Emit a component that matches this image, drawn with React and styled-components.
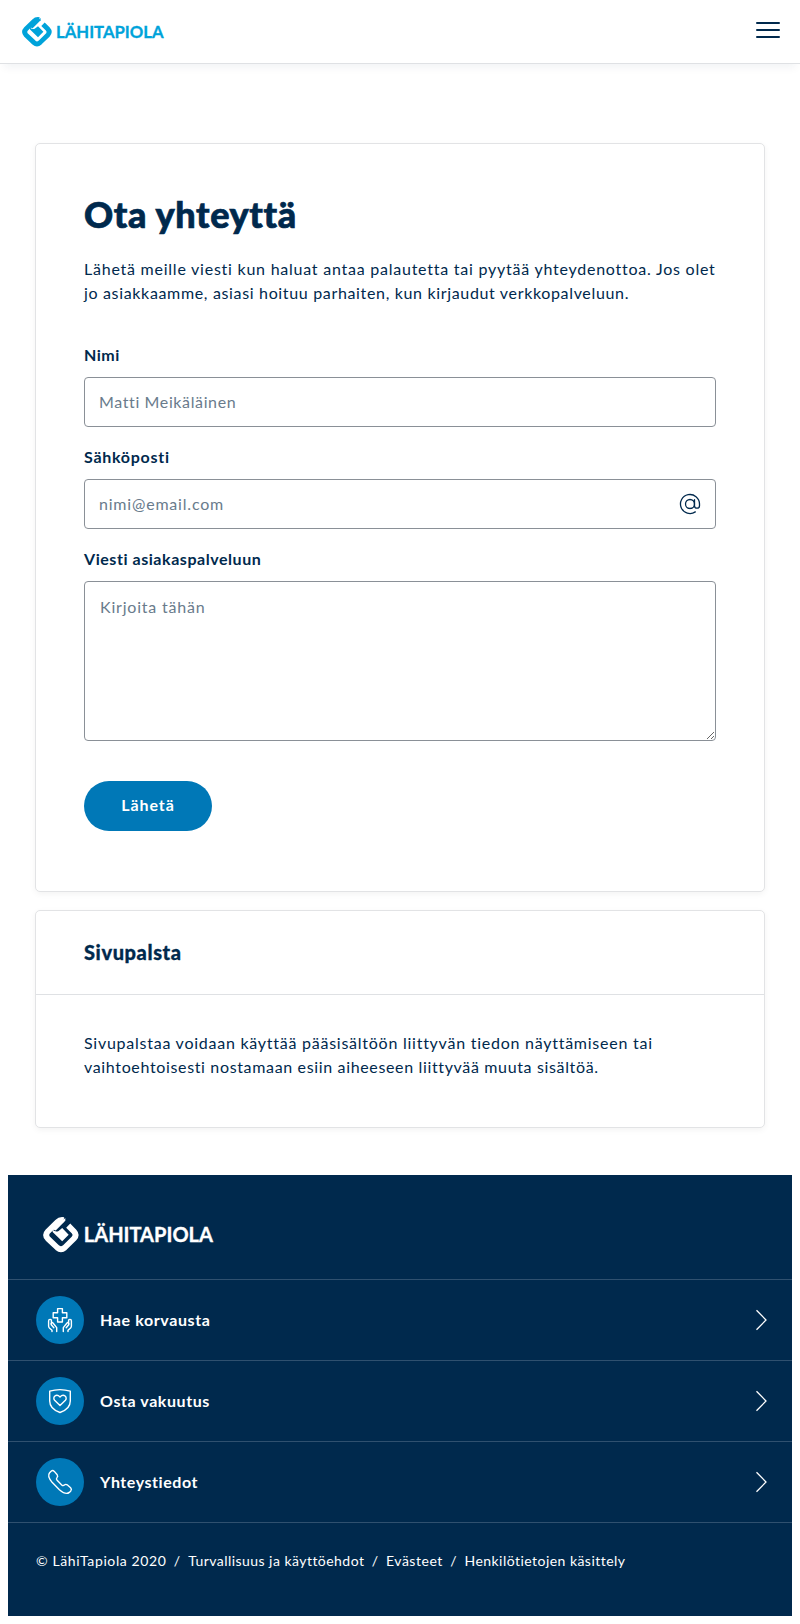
import React from 'react';
import styled, { createGlobalStyle } from 'styled-components';

const navy = '#00294d';
const blue = '#0078b7';

const GlobalStyle = createGlobalStyle`
  *, *::before, *::after { box-sizing: border-box; }
  body {
    margin: 0;
    background: #fff;
    color: ${navy};
    font-family: Lato, "Liberation Sans", sans-serif;
    font-size: 16px;
    line-height: 24px;
  }
`;

const Header = styled.header`
  display: flex;
  align-items: flex-start;
  justify-content: space-between;
  height: 64px;
  padding: 17px 20px 0 22px;
  border-bottom: 1px solid #dfe1e4;
  box-shadow: 0 8px 8px -4px rgba(0, 41, 77, 0.05);
`;

const LogoBox = styled.div`
  display: flex;
  align-items: center;
  color: ${(p) => p.$color};
  svg { display: block; overflow: visible; }
  text { font-family: Lato, sans-serif; font-weight: 700; font-size: 17.6px; stroke: currentColor; stroke-width: 0.3px; }
`;

const MenuButton = styled.button`
  display: flex;
  flex-direction: column;
  gap: 5px;
  width: 24px;
  margin-top: 5px;
  padding: 0;
  border: 0;
  background: none;
`;

const MenuBar = styled.span`
  height: 2px;
  border-radius: 1px;
  background: ${navy};
`;

const Main = styled.main`
  display: flex;
  flex-direction: column;
  gap: 18px;
  padding: 79px 35px 47px;
`;

const Card = styled.section`
  border: 1px solid #e2e3e5;
  border-radius: 5px;
  background: #fff;
  box-shadow: 0 2px 6px rgba(0, 0, 0, 0.05);
`;

const FormCard = styled(Card)`
  height: 749px;
  padding: 48px 48px 0;
`;

const Title = styled.h1`
  margin: 0;
  font-size: 36px;
  line-height: 44px;
  font-weight: 900;
  letter-spacing: 0.65px;
  -webkit-text-stroke: 0.7px currentColor;
`;

const Text = styled.p`
  margin: ${(p) => p.$margin || 0};
`;

const Line = styled.span`
  display: block;
  white-space: nowrap;
  letter-spacing: ${(p) => p.$spacing};
`;

const Field = styled.div`
  display: flex;
  flex-direction: column;
  margin-bottom: ${(p) => p.$gap || '18px'};
`;

const Label = styled.label`
  margin-bottom: 10px;
  font-weight: 700;
  letter-spacing: ${(p) => p.$spacing};
`;

const InputFrame = styled.div`
  display: flex;
  align-items: center;
  height: 50px;
  padding: 0 13px 0 14px;
  border: 1px solid #8a9097;
  border-radius: 4px;
`;

const Input = styled.input`
  flex: 1;
  min-width: 0;
  padding: 0;
  border: 0;
  outline: 0;
  background: none;
  font: inherit;
  letter-spacing: ${(p) => p.$spacing};
  &::placeholder { color: #697b8c; opacity: 1; }
`;

const TextArea = styled.textarea`
  display: block;
  width: 100%;
  height: 160px;
  padding: 13px 15px;
  border: 1px solid #8a9097;
  border-radius: 4px;
  outline: 0;
  background: #fff;
  font: inherit;
  letter-spacing: ${(p) => p.$spacing};
  &::placeholder { color: #697b8c; opacity: 1; }
`;

const Submit = styled.button`
  display: block;
  width: 128px;
  height: 50px;
  padding: 0 0 3px;
  border: 0;
  border-radius: 25px;
  background: ${blue};
  color: #fff;
  font: inherit;
  font-weight: 700;
  letter-spacing: 0.95px;
`;

const SideHeading = styled.h2`
  margin: 0;
  padding: 29px 48px 29px;
  border-bottom: 1px solid #dfe1e4;
  font-size: 20px;
  line-height: 25px;
  font-weight: 900;
  letter-spacing: 0.6px;
  -webkit-text-stroke: 0.3px currentColor;
`;

const SideBody = styled.div`
  height: 132px;
  padding: 36px 48px 0;
`;

const Footer = styled.footer`
  height: 441px;
  margin: 0 8px 8px;
  background: ${navy};
  color: #fff;
`;

const FooterBrand = styled.div`
  height: 104px;
  padding: 42px 35px 0;
`;

const FooterLink = styled.a`
  display: flex;
  align-items: center;
  height: 81px;
  padding: 0 25px 0 28px;
  border-top: 1px solid #2f506f;
  color: #fff;
  font-weight: 700;
  letter-spacing: ${(p) => p.$spacing};
`;

const IconDisc = styled.span`
  display: flex;
  align-items: center;
  justify-content: center;
  width: 48px;
  height: 48px;
  margin-right: 16px;
  border-radius: 50%;
  background: ${blue};
`;

const LinkText = styled.span`
  flex: 1;
`;

const Legal = styled.div`
  display: flex;
  padding: 26px 28px 0;
  border-top: 1px solid #2f506f;
  font-size: 14px;
`;

const LegalItem = styled.span`
  letter-spacing: ${(p) => p.$spacing};
  &:not(:last-child)::after { content: '/'; margin: 0 7.4px; }
`;

const Stroke = ({ size = 24, width = 1.4, children }) => (
  <svg width={size} height={size} viewBox="0 0 24 24" fill="none" stroke="currentColor"
    strokeWidth={width} strokeLinecap="round" strokeLinejoin="round" overflow="visible">{children}</svg>
);

const Logo = ({ color, scale = 1 }) => (
  <LogoBox $color={color}>
    <svg width={142 * scale} height={30 * scale} viewBox="0 0 142 30">
      <path fill="none" stroke="currentColor" strokeWidth="4.8"
        d="M17.2 2.5Q14.2 1.9 12 4.1L4 12Q1.2 15 4 18L12 25.6Q15 28.2 18 25.6L25.8 18Q28.6 15 25.8 12L21 7.2" />
      <path fill="currentColor" d="M18.6 .9L18.6 3.2L10.6 11.2L7.4 10Z" />
      <path fill="currentColor" d="M8 10.6Q10.6 13 13 11.6L16 9.2L21.4 14.8L16 20.2L8 12.6Z" />
      <text x="34" y="20.8" fill="currentColor" textLength="107.6" lengthAdjust="spacingAndGlyphs">LÄHITAPIOLA</text>
    </svg>
  </LogoBox>
);

const AtIcon = () => (
  <Stroke width={1.3}>
    <circle cx="12" cy="12" r="4.5" />
    <path d="M16.5 7.6V13.7A2.5 2.5 0 0 0 21.5 13.7V12A9.5 9.5 0 1 0 17.3 19.9" />
  </Stroke>
);

const CareIcon = () => (
  <Stroke>
    <path d="M9.6 .6H14.4V4.8H18.8V9.8H14.4V14H9.6V9.8H5.2V4.8H9.6Z" />
    <path d="M3.4 16.8V12.6C3.4 10.9.6 10.9.6 12.9V18Q.6 19.2 1.4 20L4 22.2V23.6M8.7 23.6V19.6L5.2 15.2C3.9 13.8 2.3 15.4 3.3 16.8L5.8 19.8" />
    <path d="M20.6 16.8V12.6C20.6 10.9 23.4 10.9 23.4 12.9V18Q23.4 19.2 22.6 20L20 22.2V23.6M15.3 23.6V19.6L18.8 15.2C20.1 13.8 21.7 15.4 20.7 16.8L18.2 19.8" />
  </Stroke>
);

const ShieldIcon = () => (
  <Stroke>
    <path d="M1.7 2.2Q12-1 22.3 2.2V12Q22.3 20 12 23.5Q1.7 20 1.7 12Z" />
    <path d="M12 16.6L6.6 11.3C4.1 8.5 8.1 4 12 7.9C15.9 4 19.9 8.5 17.4 11.3Z" />
  </Stroke>
);

const PhoneIcon = () => (
  <Stroke>
    <path d="M1.6 2.7L3.1 1.2Q4.8-.1 6.3 1.4L9.2 4.8Q10.3 6.3 9 7.6Q7.8 8.9 9.1 10.3L13.7 14.9Q15.1 16.2 16.4 15Q17.7 13.8 19.2 14.8L22.6 17.7Q24.1 19.2 22.8 20.9L21.3 22.4Q18 25.3 11.4 19.7L4.3 12.6Q-1.2 6 1.6 2.7Z" />
  </Stroke>
);

const Chevron = () => (
  <svg width="11" height="22" viewBox="0 0 11 22" fill="none" stroke="currentColor" strokeWidth="1.3">
    <path d="M.5 1.2L10 11L.5 20.8" />
  </svg>
);

const links = [
  { text: 'Hae korvausta', icon: CareIcon, spacing: '0.62px' },
  { text: 'Osta vakuutus', icon: ShieldIcon, spacing: '0.58px' },
  { text: 'Yhteystiedot', icon: PhoneIcon, spacing: '0.55px' },
];

const legal = [
  { text: '© LähiTapiola 2020', spacing: '0.6px' },
  { text: 'Turvallisuus ja käyttöehdot', spacing: '0.46px' },
  { text: 'Evästeet', spacing: '0.53px' },
  { text: 'Henkilötietojen käsittely', spacing: '0.46px' },
];

export default function App() {
  return (
    <>
      <GlobalStyle />
      <Header>
        <Logo color="#00a3da" />
        <MenuButton aria-label="Valikko">
          <MenuBar /><MenuBar /><MenuBar />
        </MenuButton>
      </Header>
      <Main>
        <FormCard>
          <Title>Ota yhteyttä</Title>
          <Text $margin="21px 0 38px">
            <Line $spacing="0.76px">Lähetä meille viesti kun haluat antaa palautetta tai pyytää yhteydenottoa. Jos olet</Line>
            <Line $spacing="0.66px">jo asiakkaamme, asiasi hoituu parhaiten, kun kirjaudut verkkopalveluun.</Line>
          </Text>
          <Field>
            <Label htmlFor="name" $spacing="0.5px">Nimi</Label>
            <InputFrame><Input id="name" placeholder="Matti Meikäläinen" $spacing="0.62px" /></InputFrame>
          </Field>
          <Field>
            <Label htmlFor="email" $spacing="0.73px">Sähköposti</Label>
            <InputFrame>
              <Input id="email" placeholder="nimi@email.com" $spacing="0.8px" />
              <AtIcon />
            </InputFrame>
          </Field>
          <Field $gap="40px">
            <Label htmlFor="message" $spacing="0.55px">Viesti asiakaspalveluun</Label>
            <TextArea id="message" placeholder="Kirjoita tähän" $spacing="0.8px" />
          </Field>
          <Submit type="button">Lähetä</Submit>
        </FormCard>
        <Card as="aside">
          <SideHeading>Sivupalsta</SideHeading>
          <SideBody>
            <Text>
              <Line $spacing="0.75px">Sivupalstaa voidaan käyttää pääsisältöön liittyvän tiedon näyttämiseen tai</Line>
              <Line $spacing="0.65px">vaihtoehtoisesti nostamaan esiin aiheeseen liittyvää muuta sisältöä.</Line>
            </Text>
          </SideBody>
        </Card>
      </Main>
      <Footer>
        <FooterBrand><Logo color="#fff" scale={1.2} /></FooterBrand>
        {links.map(({ text, icon: Icon, spacing }) => (
          <FooterLink key={text} $spacing={spacing}>
            <IconDisc><Icon /></IconDisc>
            <LinkText>{text}</LinkText>
            <Chevron />
          </FooterLink>
        ))}
        <Legal>
          {legal.map(({ text, spacing }) => (
            <LegalItem key={text} $spacing={spacing}>{text}</LegalItem>
          ))}
        </Legal>
      </Footer>
    </>
  );
}
